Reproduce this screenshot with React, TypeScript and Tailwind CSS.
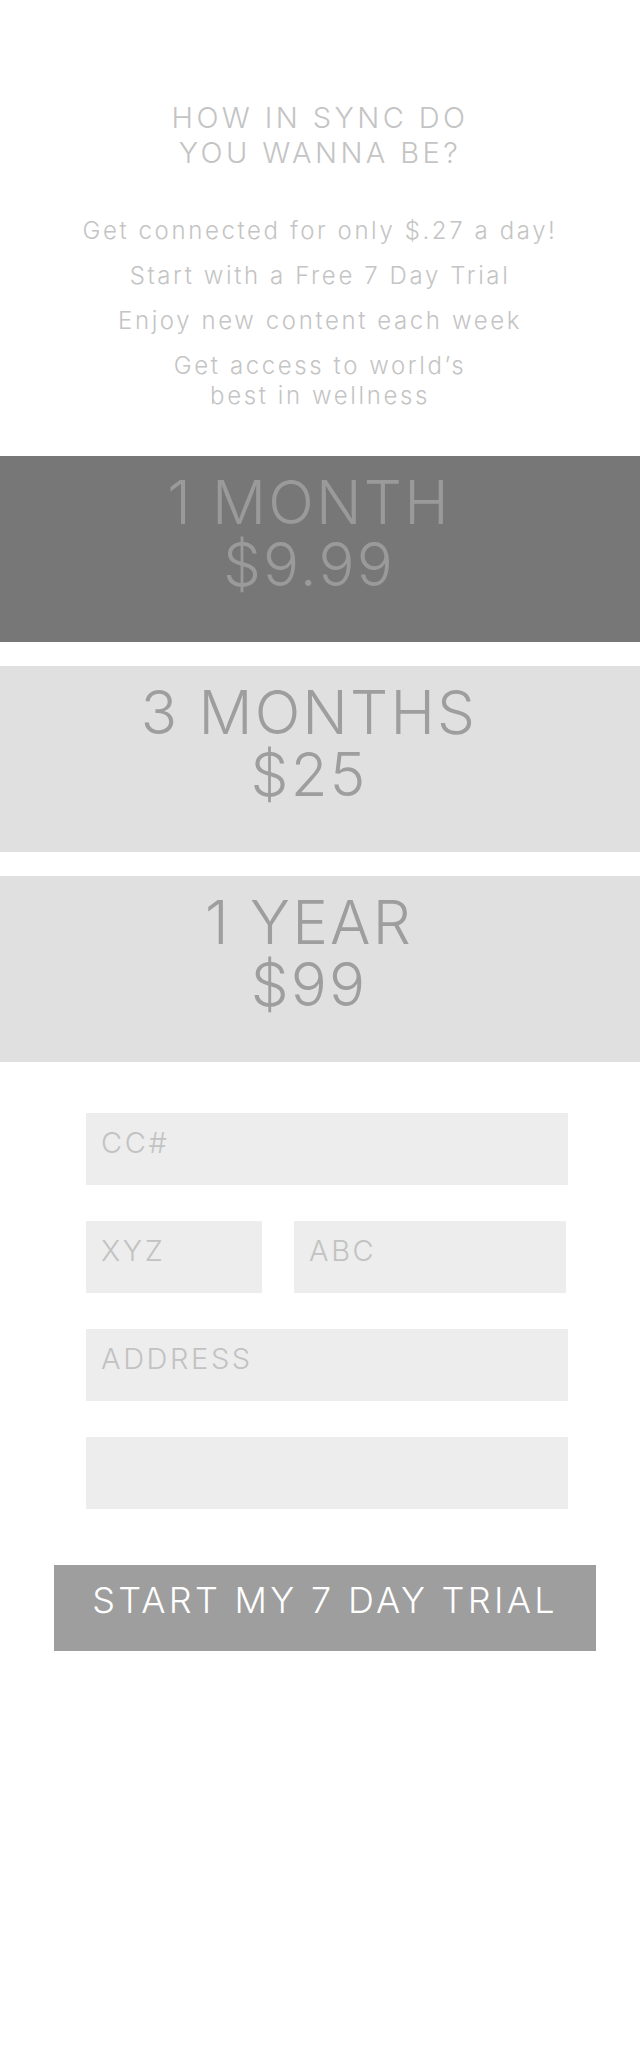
import React from 'react';

const plans = [
  { term: '1 MONTH', price: '$9.99', active: true },
  { term: '3 MONTHS', price: '$25', active: false },
  { term: '1 YEAR', price: '$99', active: false },
];

const font = { fontFamily: 'Inter, "Noto Sans", sans-serif' };

const field =
  'h-[72px] bg-[#ededed] pl-[15px] pt-[15px] pb-[28px] text-[29px] leading-[29px] tracking-[2.6px] text-[#9e9e9e] placeholder:text-[#c2c2c2] outline-none';

export default function App() {
  return (
    <div className="w-full min-h-[2048px] bg-white font-light" style={font}>
      {/* intro */}
      <header className="pt-[100px] flex flex-col items-center text-center text-[#c4c4c4]">
        <h1 className="text-[29px] leading-[35px] tracking-[3.4px] font-light">
          HOW IN SYNC DO
          <br />
          YOU WANNA BE?
        </h1>
        <div className="mt-[46px] flex flex-col gap-[15px] text-[24px] leading-[30px] tracking-[2.6px]">
          <p>Get connected for only $.27 a day!</p>
          <p>Start with a Free 7 Day Trial</p>
          <p>Enjoy new content each week</p>
          <p>
            Get access to world’s
            <br />
            best in wellness
          </p>
        </div>
      </header>

      {/* plans */}
      <section className="mt-[45px] flex flex-col gap-[24px]">
        {plans.map((p) => (
          <button
            key={p.term}
            className={
              'h-[186px] w-full pt-[15px] pr-[22px] flex flex-col items-center text-[60px] leading-[62px] tracking-[2.2px] font-light ' +
              (p.active ? 'bg-[#777777] text-[#9a9a9a]' : 'bg-[#e0e0e0] text-[#9e9e9e]')
            }
          >
            <span>
              {p.term}
              <br />
              {p.price}
            </span>
          </button>
        ))}
      </section>

      {/* payment form */}
      <form className="mt-[51px] ml-[54px] w-[542px] flex flex-col">
        <div className="ml-[32px] w-[482px] flex flex-col gap-[36px]">
          <input placeholder="CC#" className={field + ' w-full'} />
          <div className="flex gap-[32px]">
            <input placeholder="XYZ" className={field + ' w-[176px]'} />
            <input placeholder="ABC" className={field + ' w-[272px]'} />
          </div>
          <input placeholder="ADDRESS" className={field + ' w-full'} />
          <input className={field + ' w-full'} />
        </div>
        <button
          type="button"
          className="mt-[56px] h-[86px] w-full bg-[#9e9e9e] text-white text-[36px] leading-[36px] tracking-[3.3px] font-light pt-[10px] pb-[26px]"
        >
          START MY 7 DAY TRIAL
        </button>
      </form>
    </div>
  );
}
